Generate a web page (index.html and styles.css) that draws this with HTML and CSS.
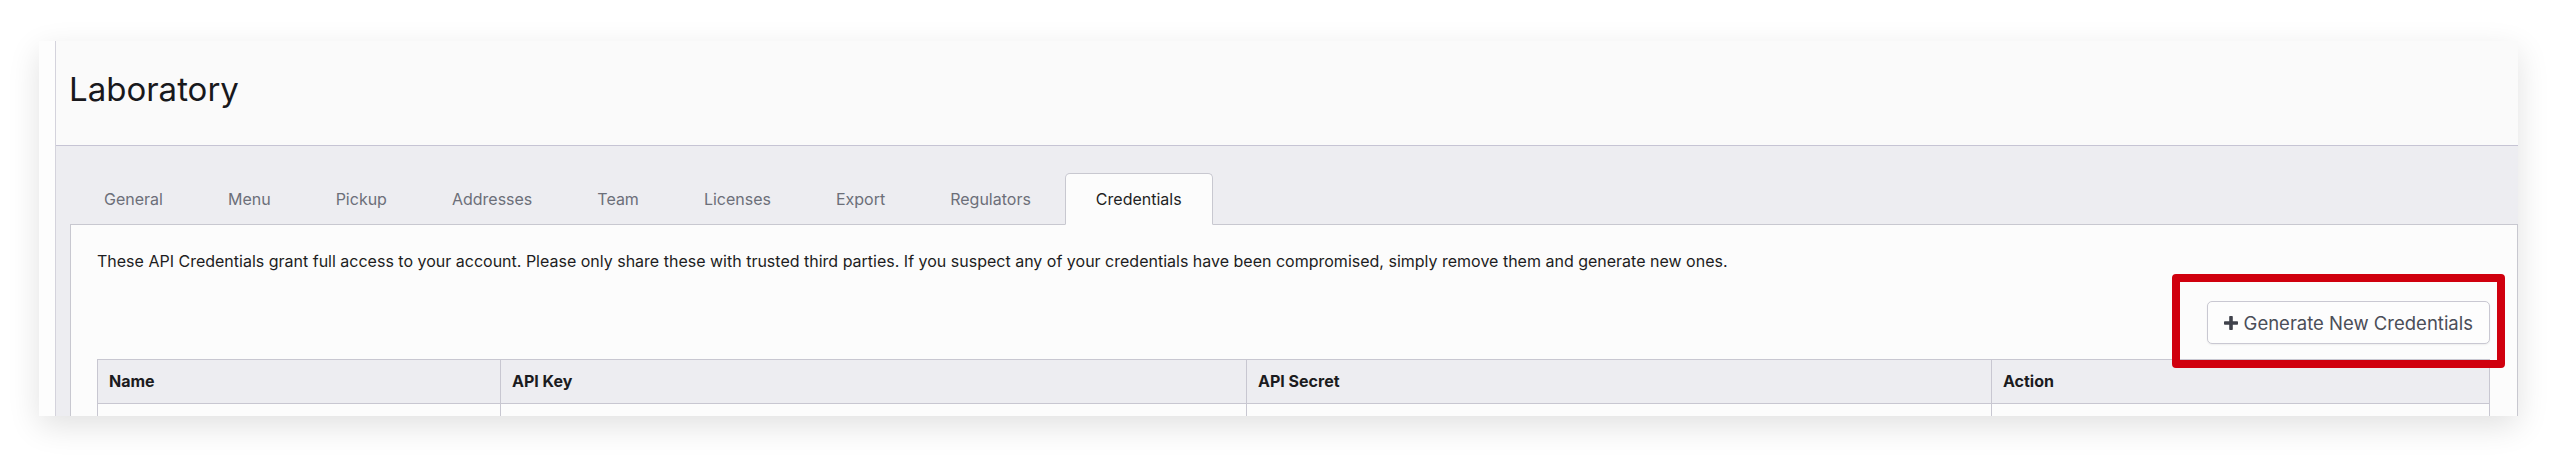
FILE: index.html
```html
<!DOCTYPE html>
<html lang="en">
<head>
  <meta charset="UTF-8" />
  <meta name="viewport" content="width=device-width, initial-scale=1.0"/>
  <title>Laboratory - Credentials</title>
  <link rel="stylesheet" href="styles.css">
</head>
<body>

  <div class="window">
    <div class="sidebar"></div>

    <div class="main">
      <header class="page-header">
        <h1>Laboratory</h1>
      </header>

      <div class="tabs-area">
        <ul class="tabs">
          <li><a href="#">General</a></li>
          <li><a href="#">Menu</a></li>
          <li><a href="#">Pickup</a></li>
          <li><a href="#">Addresses</a></li>
          <li><a href="#">Team</a></li>
          <li><a href="#">Licenses</a></li>
          <li><a href="#">Export</a></li>
          <li><a href="#">Regulators</a></li>
          <li><a href="#" class="active">Credentials</a></li>
        </ul>

        <div class="tab-content">
          <p class="intro">These API Credentials grant full access to your account. Please only share these with trusted third parties. If you suspect any of your credentials have been compromised, simply remove them and generate new ones.</p>

          <div class="actions">
            <div class="highlight-wrap">
              <button type="button" class="btn-generate">
                <svg class="icon-plus" width="14" height="14" viewBox="0 0 14 14" aria-hidden="true">
                  <rect x="5.2" y="0" width="3.6" height="14" rx="0.8"/>
                  <rect x="0" y="5.2" width="14" height="3.6" rx="0.8"/>
                </svg>
                Generate New Credentials
              </button>
              <span class="highlight"></span>
            </div>
          </div>

          <table class="cred-table">
            <thead>
              <tr>
                <th class="col-name">Name</th>
                <th class="col-key">API Key</th>
                <th class="col-secret">API Secret</th>
                <th>Action</th>
              </tr>
            </thead>
            <tbody>
              <tr>
                <td></td>
                <td></td>
                <td></td>
                <td></td>
              </tr>
            </tbody>
          </table>
        </div>
      </div>
    </div>
  </div>

</body>
</html>
```

FILE: styles.css
```css
* {
  margin: 0;
  padding: 0;
  box-sizing: border-box;
  font-family: 'Inter', 'Liberation Sans', sans-serif;
}

html, body {
  height: 100%;
  background: #fff;
}

body {
  padding: 41px 40px 0 39px;
}

.window {
  display: flex;
  height: 375px;
  overflow: hidden;
  background: #fdfdfd;
  box-shadow: 0 10px 30px rgba(0, 0, 0, 0.12);
}

.sidebar {
  width: 17px;
  flex-shrink: 0;
  background: #fdfdfd;
  border-right: 1px solid #d4d3dc;
}

.main {
  flex: 1;
  min-width: 0;
  display: flex;
  flex-direction: column;
}

.page-header {
  height: 105px;
  flex-shrink: 0;
  padding: 28px 13px 0;
  background: #fafafa;
  border-bottom: 1px solid #c6c4d4;
}

h1 {
  font-size: 33px;
  font-weight: 400;
  line-height: 40px;
  color: #18181c;
}

.tabs-area {
  flex: 1;
  padding: 27px 0 0 14px;
  background: #ededf1;
}

.tabs {
  display: flex;
  list-style: none;
  padding-left: 3px;
  margin-bottom: -1px;
}

.tabs li {
  margin-right: 3px;
}

.tabs a {
  display: block;
  padding: 13px 30px;
  border: 1px solid transparent;
  border-radius: 5px 5px 0 0;
  font-size: 16px;
  line-height: 24px;
  color: #6c6f79;
  text-decoration: none;
}

.tabs a.active {
  position: relative;
  background: #fcfcfc;
  border-color: #c8c8d0;
  border-bottom-color: #fcfcfc;
  color: #1f1f24;
}

.tab-content {
  height: 100%;
  padding: 25px 27px 0 26px;
  background: #fcfcfc;
  border: 1px solid #c8c8d0;
}

.intro {
  font-size: 16px;
  line-height: 22px;
  color: #1d1d22;
}

.actions {
  display: flex;
  justify-content: flex-end;
  margin-top: 29px;
}

.highlight-wrap {
  position: relative;
}

.btn-generate {
  display: inline-flex;
  align-items: center;
  gap: 6px;
  height: 43px;
  padding: 0 16px;
  background: #fdfdfd;
  border: 1px solid #c9c8d2;
  border-radius: 5px;
  font-size: 18.5px;
  color: #4b4e58;
  box-shadow: 0 1px 2px rgba(0, 0, 0, 0.06);
  cursor: pointer;
}

.icon-plus {
  fill: #3f424b;
}

.highlight {
  position: absolute;
  top: -27px;
  left: -35px;
  right: -15px;
  bottom: -24px;
  border: 8px solid #d0000e;
  border-radius: 4px;
  pointer-events: none;
}

.cred-table {
  width: 100%;
  margin-top: 15px;
  border-collapse: collapse;
  table-layout: fixed;
  border: 1px solid #c8c7d1;
}

.cred-table th {
  padding: 10px 11px;
  background: #ededf1;
  border: 1px solid #c8c7d1;
  font-size: 16px;
  font-weight: 700;
  line-height: 23px;
  text-align: left;
  color: #1b1b20;
}

.cred-table td {
  height: 50px;
  background: #fcfcfc;
  border: 1px solid #c8c7d1;
}

.col-name {
  width: 403px;
}

.col-key {
  width: 746px;
}

.col-secret {
  width: 745px;
}
```
